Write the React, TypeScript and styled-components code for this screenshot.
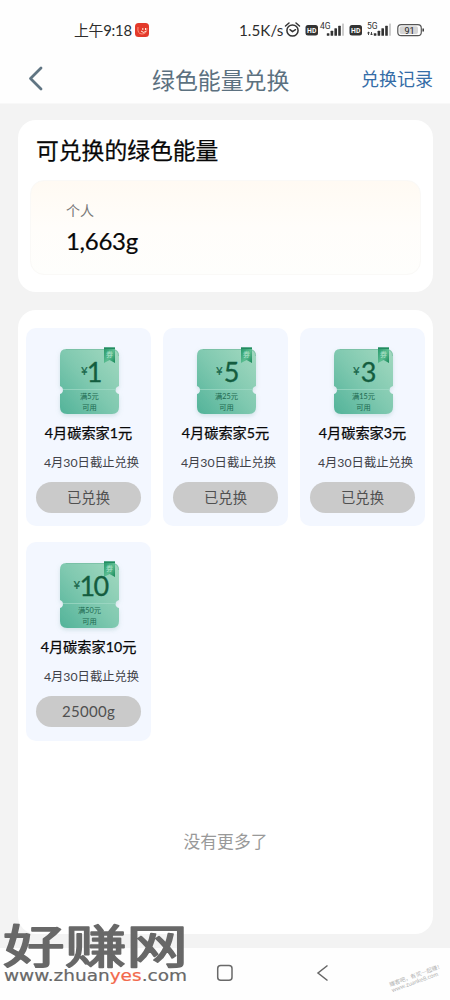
import React from "react";
import styled, { createGlobalStyle } from "styled-components";

const GlobalStyle = createGlobalStyle`
  * { box-sizing: border-box; }
  body {
    margin: 0;
    background: #fff;
    font-family: Lato, "Noto Sans CJK SC", sans-serif;
    color: #080808;
  }
`;

const Screen = styled.div`
  position: relative;
  display: flex;
  flex-direction: column;
  width: 450px;
  height: 1000px;
  overflow: hidden;
  background: #fefefe;
  white-space: nowrap;
`;

const StatusBar = styled.div`
  display: flex;
  align-items: center;
  height: 60px;
  padding: 0 25px 0 74px;
  color: #2d2d2d;
  line-height: 20px;
  svg { display: block; flex: none; }
`;

const Clock = styled.span`
  width: 58px;
  margin-right: 3px;
  font-size: 14.8px;
  letter-spacing: -0.2px;
`;

const Speed = styled.span`
  width: 45px;
  margin-left: auto;
  font-size: 15.2px;
  letter-spacing: 0.05px;
`;

const NavBar = styled.header`
  display: grid;
  grid-template-columns: 118px 1fr 118px;
  align-items: center;
  height: 44px;
  padding: 0 17px 5px 26px;
  border-bottom: 1px solid #f8f8f8;
`;

const PageTitle = styled.h1`
  margin: 0;
  padding: 1px 0 0 8px;
  color: #5c7180;
  font-size: 22.9px;
  font-weight: 400;
  line-height: 32px;
`;

const RecordLink = styled.a`
  color: #356da7;
  font-size: 18px;
  line-height: 28px;
  text-align: right;
`;

const Content = styled.main`
  display: flex;
  flex-direction: column;
  gap: 18px;
  height: 844px;
  padding: 16px 17px 14px 18px;
  background: #f3f3f3;
`;

const Panel = styled.section`
  border-radius: 18px;
  background: #fff;
`;

const EnergyPanel = styled(Panel)`
  height: 172px;
  padding: 13px 12px 0;
`;

const EnergyTitle = styled.h2`
  margin: 0 0 13px 6px;
  font-size: 22.8px;
  line-height: 34px;
  font-weight: 400;
  -webkit-text-stroke: 0.25px #080808;
`;

const EnergyBox = styled.div`
  height: 95px;
  padding: 20px 35px;
  border: 1px solid #faf9f7;
  border-radius: 14px;
  background: linear-gradient(#fffaf3, #fffdfa 50%, #fefefc);
`;

const Owner = styled.div`
  color: #777;
  font-size: 14px;
  line-height: 20px;
`;

const Amount = styled.div`
  margin-top: 4px;
  font-size: 24px;
  line-height: 32px;
  letter-spacing: -0.3px;
  -webkit-text-stroke: 0.2px #080808;
`;

const CouponPanel = styled(Panel)`
  flex: 1;
  padding: 18px 8px;
`;

const CouponGrid = styled.div`
  display: grid;
  grid-template-columns: repeat(3, 125px);
  gap: 16px 12px;
`;

const CouponCard = styled.article<{ $tall?: boolean }>`
  display: flex;
  flex-direction: column;
  align-items: center;
  height: ${(p) => (p.$tall ? 199 : 198)}px;
  padding-top: 18px;
  border-radius: 10px;
  background: #f3f7ff;
`;

const Ticket = styled.svg`
  display: block;
  width: 71px;
  height: 74px;
  margin-left: 2px;
`;

const CouponName = styled.h3`
  margin: 1px 0 0;
  font-size: 14.2px;
  line-height: 24px;
  font-weight: 400;
  -webkit-text-stroke: 0.25px #080808;
`;

const Deadline = styled.div`
  margin: 7px 0 8px 6px;
  color: #414249;
  font-size: 12.3px;
  line-height: 22px;
`;

const RedeemButton = styled.button`
  width: 105px;
  height: 31px;
  padding: 0;
  border: 0;
  border-radius: 16px;
  background: #cacaca;
  color: #505050;
  font: 400 14.3px/30px Lato, "Noto Sans CJK SC", sans-serif;
`;

const Energy = styled.span`
  font-size: 15px;
  letter-spacing: 0.3px;
`;

const EndNote = styled.p`
  margin: 88px 0 0;
  color: #999;
  font-size: 16.8px;
  line-height: 26px;
  text-align: center;
`;

const SystemNav = styled.nav`
  display: flex;
  align-items: center;
  height: 52px;
  padding: 0 0 2px 216px;
  gap: 82px;
`;

const SiteMark = styled.svg`
  position: absolute;
  left: 0;
  top: 904px;
  width: 200px;
  height: 96px;
`;

const CornerMark = styled.div`
  position: absolute;
  left: 389px;
  top: 972px;
  color: #b0b0b0;
  font-size: 5.6px;
  line-height: 6px;
  transform: rotate(-20deg);
  small { display: block; font-size: 5.9px; }
`;

const coupons = [
  { value: "1", minimum: "5" },
  { value: "5", minimum: "25" },
  { value: "3", minimum: "15" },
  { value: "10", minimum: "50", cost: "25000g" },
];

function TicketArt({ value, minimum }: { value: string; minimum: string }) {
  const id = `ticket-${value}`;
  const wide = value.length > 1;
  return (
    <Ticket viewBox="0 0 71 74">
      <defs>
        <linearGradient id={id} x1="1" y1="0" x2="0" y2="1">
          <stop stopColor="#a3d9c0" />
          <stop offset=".5" stopColor="#80c9b0" />
          <stop offset="1" stopColor="#52b399" />
        </linearGradient>
        <linearGradient id={`${id}-tag`} x2="1" y2="1">
          <stop stopColor="#239568" />
          <stop offset=".55" stopColor="#5bbd91" />
          <stop offset="1" stopColor="#178758" />
        </linearGradient>
        <filter id={`${id}-shadow`} x="-20%" y="-20%" width="140%" height="150%">
          <feDropShadow dx="0" dy="2" stdDeviation="2" floodColor="#74aca6" floodOpacity=".28" />
        </filter>
      </defs>
      <path
        d="M12 3H58Q65 3 65 10V40Q61.5 41 61.5 44T65 48V61Q65 68 58 68H13Q6 68 6 61V48Q9 47 9 44T6 40V10Q6 3 12 3Z"
        fill={`url(#${id})`}
        filter={`url(#${id}-shadow)`}
      />
      <path d="M12 3.5H58Q64.5 3.5 64.5 10" fill="none" stroke="#74bba0" strokeWidth=".7" />
      <path d="M9 43.5H62" stroke="#a2dac7" strokeWidth=".7" />
      <path d="M50 1.5H61V17L55.5 14L50 17Z" fill={`url(#${id}-tag)`} />
      <path d="M50 1.5H61V3H50Z" fill="#238b60" />
      <text x="55.5" y="10.5" textAnchor="middle" fontSize="7" fill="#b2e3cc">券</text>
      <text x={wide ? 19.5 : value === "1" ? 27 : 25} y="28.5" fontSize="11.5" fill="#176548" stroke="#176548" strokeWidth=".2">¥</text>
      <text x={wide ? 39.5 : 40.5} y="36" textAnchor="middle" fontSize="27" fill="#145d3f" stroke="#145d3f" strokeWidth=".3" letterSpacing={wide ? -1.6 : 0}>{value}</text>
      <text x="35.5" y="53" textAnchor="middle" fontSize="7.3" fill="#1d6950">{`满${minimum}元`}</text>
      <text x="35.5" y="63.5" textAnchor="middle" fontSize="7.3" fill="#1d6950">可用</text>
    </Ticket>
  );
}

function Signal({ x, label, data }: { x: number; label: string; data?: boolean }) {
  return (
    <g>
      <text x={x - 6.5} y="8" fontSize="8.5" fontFamily="Roboto" fill="#333">{label}</text>
      {data ? (
        <path d={`M${x - 5} 14V11m-1.2 1.2 1.2-1.2 1.2 1.2M${x - 2} 11v3m-1.2-1.2 1.2 1.2 1.2-1.2`} fill="none" stroke="#333" strokeWidth=".9" />
      ) : null}
      {[0, 1, 2, 3].map((i) => (
        <rect key={i} x={x + 0.3 + i * 3.8} y={12.3 - i * 2.5} width="2.6" height={2.5 + i * 2.5} rx=".5" fill="#333" />
      ))}
      <rect x={x + 15.5} y="2.5" width="2" height="12.3" rx=".5" fill="#ccc" />
    </g>
  );
}

export default function App() {
  return (
    <>
      <GlobalStyle />
      <Screen>
        <StatusBar>
          <Clock>上午9:18</Clock>
          <svg width="14" height="14" viewBox="0 0 14 14">
            <rect width="14" height="14" rx="3.5" fill="#e33a2b" />
            <path d="M3 4q-1 7 4 7 5 0 5-6" fill="none" stroke="#ff9480" />
            <path d="M7.8 5v2M10.5 5v2M6 8q3 3 5 0" fill="none" stroke="#fff0df" />
          </svg>
          <Speed>1.5K/s</Speed>
          <svg width="141" height="18" viewBox="0 0 141 18">
            <g fill="none" stroke="#333" strokeWidth="1.5" strokeLinecap="round" strokeLinejoin="round">
              <circle cx="8.5" cy="9.5" r="5.6" />
              <path d="M1.5 5 5 2M12 2l3.5 3M6 8.7l2.5 2 3-2" />
            </g>
            <rect x="21.5" y="4" width="12.5" height="10.5" rx="2.5" fill="#333" />
            <text x="27.7" y="11.8" textAnchor="middle" fontSize="6.8" fontFamily="Roboto" fontWeight="700" fill="#fff">HD</text>
            <Signal x={42.5} label="4G" />
            <rect x="65.5" y="4" width="12.5" height="10.5" rx="2.5" fill="#333" />
            <text x="71.7" y="11.8" textAnchor="middle" fontSize="6.8" fontFamily="Roboto" fontWeight="700" fill="#fff">HD</text>
            <Signal x={89.5} label="5G" data />
            <rect x="113.8" y="3.7" width="23.5" height="11" rx="3.5" fill="#fff" stroke="#555" strokeWidth="1.2" />
            <rect x="115.5" y="5.3" width="18.5" height="7.8" rx="2" fill="#d5d5d5" />
            <path d="M139.2 7.5v3" stroke="#444" strokeWidth="1.6" />
            <text x="125.5" y="12.5" textAnchor="middle" fontSize="9" fontFamily="Roboto" fill="#222">91</text>
          </svg>
        </StatusBar>
        <NavBar>
          <svg width="20" height="28" viewBox="0 0 20 28">
            <path d="M15 3 4.5 13.5 15 24" fill="none" stroke="#607583" strokeWidth="2.8" strokeLinecap="round" strokeLinejoin="round" />
          </svg>
          <PageTitle>绿色能量兑换</PageTitle>
          <RecordLink>兑换记录</RecordLink>
        </NavBar>
        <Content>
          <EnergyPanel>
            <EnergyTitle>可兑换的绿色能量</EnergyTitle>
            <EnergyBox>
              <Owner>个人</Owner>
              <Amount>1,663g</Amount>
            </EnergyBox>
          </EnergyPanel>
          <CouponPanel>
            <CouponGrid>
              {coupons.map((coupon, index) => (
                <CouponCard key={coupon.value} $tall={index > 2}>
                  <TicketArt value={coupon.value} minimum={coupon.minimum} />
                  <CouponName>4月碳索家{coupon.value}元</CouponName>
                  <Deadline>4月30日截止兑换</Deadline>
                  <RedeemButton>{coupon.cost ? <Energy>{coupon.cost}</Energy> : "已兑换"}</RedeemButton>
                </CouponCard>
              ))}
            </CouponGrid>
            <EndNote>没有更多了</EndNote>
          </CouponPanel>
        </Content>
        <SystemNav>
          <svg width="18" height="18" viewBox="0 0 18 18">
            <rect x="1.7" y="1.5" width="14.3" height="14.8" rx="3" fill="none" stroke="#696969" strokeWidth="1.5" />
          </svg>
          <svg width="14" height="18" viewBox="0 0 14 18">
            <path d="M11.5 1.5 2 9l9.5 7.5" fill="none" stroke="#666" strokeWidth="1.5" />
          </svg>
        </SystemNav>
        <SiteMark viewBox="0 0 200 96">
          <text
            transform="translate(3 58.5) scale(1.34 1)"
            fontFamily="Noto Sans CJK SC"
            fontSize="46"
            fontWeight="400"
            fill="#686868"
            stroke="#686868"
            strokeWidth="1.6"
            strokeLinejoin="round"
          >
            好赚网
          </text>
          <text
            x="4"
            y="77"
            textLength="183"
            lengthAdjust="spacingAndGlyphs"
            fontFamily="DejaVu Sans"
            fontSize="15.5"
            fill="#686868"
            stroke="#686868"
            strokeWidth=".2"
          >
            www.zhuan<tspan fill="#f2694c" stroke="#f2694c">yes</tspan>.com
          </text>
        </SiteMark>
        <CornerMark>
          赚客吧，有奖一起赚！
          <small>www.zuanke8.com</small>
        </CornerMark>
      </Screen>
    </>
  );
}
